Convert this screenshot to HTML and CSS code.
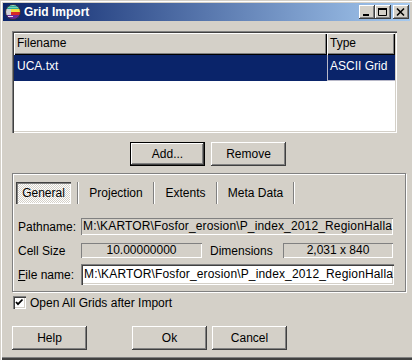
FILE: index.html
```html
<!DOCTYPE html>
<html lang="en">
<head>
  <meta charset="UTF-8" />
  <title>Grid Import</title>
  <link rel="stylesheet" href="styles.css">
</head>
<body>
  <div class="window">
    <div class="titlebar">
      <svg class="app-icon" width="16" height="16" viewBox="0 0 16 16">
        <defs><clipPath id="globe"><circle cx="8" cy="8" r="7.5"/></clipPath></defs>
        <g clip-path="url(#globe)">
          <rect width="16" height="16" fill="#5a4a9a"/>
          <rect y="0" width="16" height="5" fill="#2aa89a"/>
          <rect y="1" width="16" height="1" fill="#9fe0c8"/>
          <rect y="3" width="16" height="1" fill="#7fd0b0"/>
          <rect y="5" width="16" height="3" fill="#f0e040"/>
          <rect y="8" width="16" height="3" fill="#d82828"/>
          <rect x="1" y="5" width="5" height="6" fill="#d0d0d8"/>
          <rect y="11" width="16" height="5" fill="#6a2a9a"/>
          <rect x="3" y="12" width="5" height="1" fill="#e0e0f0"/>
        </g>
        <circle cx="8" cy="8" r="7.5" fill="none" stroke="#303040" stroke-width="1"/>
      </svg>
      <span class="title">Grid Import</span>
      <div class="caption-buttons">
        <div class="cap-btn">
          <svg width="12" height="10" viewBox="0 0 12 10"><rect x="2" y="7" width="6" height="2" fill="#000"/></svg>
        </div>
        <div class="cap-btn">
          <svg width="12" height="10" viewBox="0 0 12 10"><path d="M1.5 1.5h8v7h-8z" fill="none" stroke="#000"/><rect x="1" y="1" width="9" height="2" fill="#000"/></svg>
        </div>
        <div class="cap-btn close">
          <svg width="12" height="10" viewBox="0 0 12 10"><path d="M2 1.5l7 7M9 1.5l-7 7" stroke="#000" stroke-width="1.6"/></svg>
        </div>
      </div>
    </div>

    <div class="body">
      <div class="list">
        <div class="list-head">
          <div class="col col-name">Filename</div>
          <div class="col col-type">Type</div>
        </div>
        <div class="list-row selected">
          <div class="cell cell-name">UCA.txt</div>
          <div class="cell cell-type">ASCII Grid</div>
        </div>
      </div>

      <div class="list-buttons">
        <button class="btn default">Add...</button>
        <button class="btn">Remove</button>
      </div>

      <div class="panel">
        <div class="tabs">
          <div class="tab active">General</div>
          <div class="sep first"></div>
          <div class="tab tab-projection">Projection</div>
          <div class="sep"></div>
          <div class="tab tab-extents">Extents</div>
          <div class="sep"></div>
          <div class="tab tab-meta">Meta Data</div>
          <div class="sep"></div>
        </div>

        <div class="fields">
          <div class="row">
            <span class="label">Pathname:</span>
            <div class="field readonly path">M:\KARTOR\Fosfor_erosion\P_index_2012_RegionHalla</div>
          </div>
          <div class="row row-small">
            <span class="label">Cell Size</span>
            <div class="field readonly cell-size">10.00000000</div>
            <span class="label dim-label">Dimensions</span>
            <div class="field readonly dims">2,031 x 840</div>
          </div>
          <div class="row row-edit">
            <span class="label"><u>F</u>ile name:</span>
            <div class="field edit">M:\KARTOR\Fosfor_erosion\P_index_2012_RegionHalla</div>
          </div>
        </div>
      </div>

      <div class="check">
        <span class="box">
          <svg width="9" height="9" viewBox="0 0 9 9"><path d="M1 4l2 2.2L7.5 1.5" fill="none" stroke="#000" stroke-width="1.8"/></svg>
        </span>
        <span>Open All Grids after Import</span>
      </div>

      <div class="dialog-buttons">
        <button class="btn">Help</button>
        <button class="btn ok">Ok</button>
        <button class="btn cancel">Cancel</button>
      </div>
    </div>
  </div>
</body>
</html>
```

FILE: styles.css
```css
* {
  box-sizing: border-box;
}

body {
  margin: 0;
  font-family: "Liberation Sans", Arial, sans-serif;
  font-size: 12px;
  color: #000;
  background: #d4d0c8;
}

.window {
  width: 412px;
  height: 360px;
  overflow: hidden;
  background: #d4d0c8;
  padding: 3px 2px 0 3px;
  box-shadow: inset 1px 1px 0 #d4d0c8, inset 2px 2px 0 #fff,
    inset 0 -2px 0 #404040, inset 0 -3px 0 #808080;
}

/* title bar */
.titlebar {
  height: 18px;
  display: flex;
  align-items: center;
  padding-left: 2px;
  background: linear-gradient(to right, #0a246a, #a6caf0);
}

.app-icon {
  display: block;
}

.title {
  margin-left: 3px;
  color: #fff;
  font-weight: bold;
  font-size: 12px;
}

.caption-buttons {
  margin-left: auto;
  margin-right: 1px;
  display: flex;
}

.cap-btn {
  width: 16px;
  height: 14px;
  display: flex;
  align-items: center;
  justify-content: center;
  background: #d4d0c8;
  box-shadow: inset -1px -1px 0 #404040, inset 1px 1px 0 #fff,
    inset -2px -2px 0 #808080;
}

.cap-btn svg {
  display: block;
}

.cap-btn.close {
  margin-left: 2px;
}

/* content */
.body {
  padding: 10px 0 0 9px;
}

.list {
  width: 385px;
  height: 102px;
  padding: 2px;
  background: #fff;
  box-shadow: inset 1px 1px 0 #808080, inset 2px 2px 0 #404040,
    inset -1px -1px 0 #fff, inset -2px -2px 0 #d4d0c8;
}

.list-head {
  display: flex;
  height: 22px;
}

.col {
  height: 22px;
  line-height: 21px;
  padding-left: 3px;
  background: #d4d0c8;
  box-shadow: inset 1px 1px 0 #fff, inset -1px -1px 0 #000,
    inset -2px -2px 0 #808080;
}

.col-name,
.cell-name {
  width: 313px;
}

.col-type,
.cell-type {
  width: 68px;
}

.list-row {
  display: flex;
  height: 26px;
  line-height: 22px;
}

.list-row.selected {
  background: #0a246a;
  color: #fff;
}

.cell {
  padding-left: 3px;
}

.cell-type {
  border-left: 1px solid #b8b8c8;
  border-bottom: 1px solid #b8b8c8;
  padding-left: 2px;
}

.btn {
  width: 75px;
  height: 24px;
  padding: 0;
  border: 0;
  font: inherit;
  color: #000;
  background: #d4d0c8;
  box-shadow: inset -1px -1px 0 #404040, inset 1px 1px 0 #fff,
    inset -2px -2px 0 #808080;
}

.btn.default {
  box-shadow: inset 0 0 0 1px #000, inset -2px -2px 0 #404040,
    inset 2px 2px 0 #fff, inset -3px -3px 0 #808080;
}

.list-buttons {
  display: flex;
  gap: 6px;
  margin-top: 9px;
  padding-left: 118px;
}

/* tab panel */
.panel {
  width: 394px;
  height: 119px;
  margin-top: 7px;
  padding: 8px 0 0 3px;
  border: 1px solid #808080;
  box-shadow: inset 1px 1px 0 #fff, 1px 1px 0 #fff;
}

.tabs {
  display: flex;
  height: 22px;
}

.tab {
  display: flex;
  align-items: center;
  justify-content: center;
}

.tab.active {
  width: 55px;
  background: repeating-conic-gradient(#fff 0 25%, #d4d0c8 0 50%) 0 0 / 2px 2px;
  box-shadow: inset 1px 1px 0 #404040, inset 2px 2px 0 #808080,
    inset -1px -1px 0 #fff;
}

.tab-projection {
  width: 74px;
}

.tab-extents {
  width: 61px;
}

.tab-meta {
  width: 75px;
}

.sep {
  width: 2px;
  border-left: 1px solid #808080;
  border-right: 1px solid #fff;
}

.sep.first {
  margin-left: 6px;
}

.fields {
  margin-top: 14px;
  margin-left: 2px;
}

.row {
  display: flex;
  align-items: center;
  height: 17px;
}

.row-small {
  height: 15px;
  margin-top: 8px;
}

.row-edit {
  height: 21px;
  margin-top: 6px;
}

.label {
  width: 63px;
  flex: none;
  white-space: nowrap;
}

.dim-label {
  width: 73px;
  margin-left: 8px;
}

.field {
  height: 100%;
  white-space: nowrap;
  overflow: hidden;
}

.field.readonly {
  background: #d4d0c8;
  box-shadow: inset 1px 1px 0 #808080, inset -1px -1px 0 #fff;
  padding-left: 2px;
  line-height: 17px;
}

.path {
  width: 312px;
  letter-spacing: 0.15px;
}

.cell-size,
.dims {
  line-height: 15px !important;
  text-align: center;
  padding-left: 0 !important;
}

.cell-size {
  width: 121px;
}

.dims {
  width: 110px;
}

.field.edit {
  width: 313px;
  padding-left: 3px;
  line-height: 21px;
  letter-spacing: 0.15px;
  background: #fff;
  box-shadow: inset 1px 1px 0 #808080, inset 2px 2px 0 #404040,
    inset -1px -1px 0 #fff, inset -2px -2px 0 #d4d0c8;
}

/* checkbox */
.check {
  display: flex;
  align-items: center;
  gap: 4px;
  height: 13px;
  margin-top: 4px;
  margin-left: 1px;
}

.box {
  width: 13px;
  height: 13px;
  display: flex;
  align-items: center;
  justify-content: center;
  background: #fff;
  box-shadow: inset 1px 1px 0 #808080, inset 2px 2px 0 #404040,
    inset -1px -1px 0 #fff, inset -2px -2px 0 #d4d0c8;
}

.box svg {
  display: block;
}

.dialog-buttons {
  display: flex;
  margin-top: 17px;
}

.btn.ok {
  margin-left: 45px;
}

.btn.cancel {
  margin-left: 5px;
}
```
